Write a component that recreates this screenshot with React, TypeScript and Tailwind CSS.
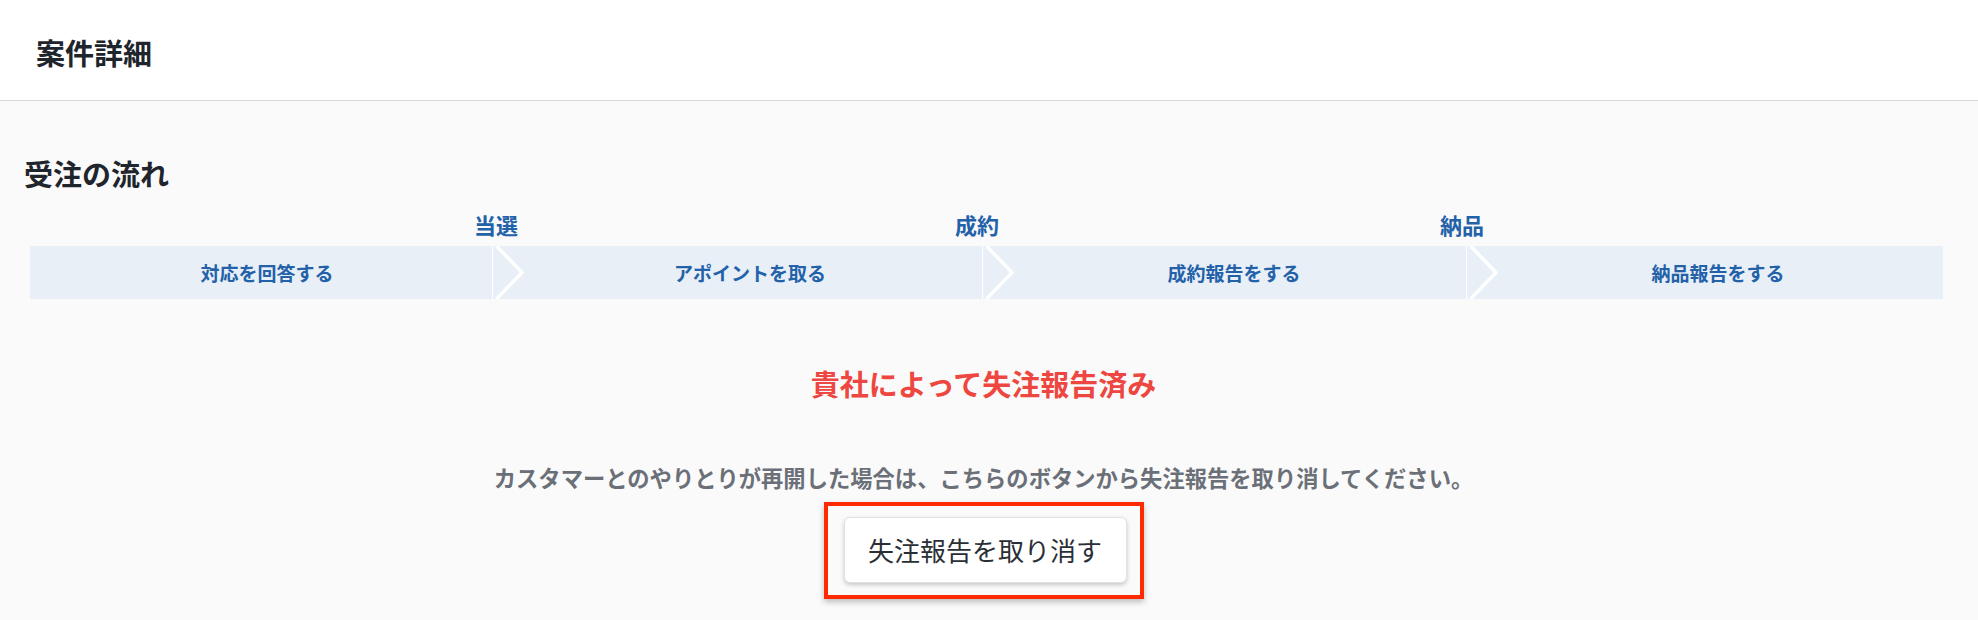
import { FC } from 'react';

type Step = {
  name: string;
  width: string;
  pad: string;
  milestone?: string;
  milestoneShift?: string;
  chevron: boolean;
};

const steps: Step[] = [
  {
    name: '対応を回答する',
    width: 'w-[462px]',
    pad: 'pl-[12px]',
    milestone: '当選',
    milestoneShift: 'mr-[-4px]',
    chevron: false,
  },
  {
    name: 'アポイントを取る',
    width: 'w-[490px]',
    pad: 'pl-[26px]',
    milestone: '成約',
    milestoneShift: 'mr-[5px]',
    chevron: true,
  },
  {
    name: '成約報告をする',
    width: 'w-[484px]',
    pad: 'pl-[20px]',
    milestone: '納品',
    milestoneShift: 'mr-[4px]',
    chevron: true,
  },
  { name: '納品報告をする', width: 'w-[477px]', pad: 'pl-[27px]', chevron: true },
];

const Chevron: FC = () => (
  <svg
    className="absolute left-0 top-0 h-[53px] w-[36px]"
    viewBox="0 0 36 53"
    fill="none"
    aria-hidden="true"
  >
    <line x1="0.5" y1="0" x2="0.5" y2="53" stroke="#ffffff" strokeWidth="1.2" />
    <polyline points="4.5,0 30,26.5 4.5,53" stroke="#ffffff" strokeWidth="3.5" />
  </svg>
);

const App: FC = () => {
  return (
    <div className="min-h-[620px] bg-[#fafafa] font-['Noto_Sans_CJK_JP','Noto_Sans',sans-serif]">
      {/* header */}
      <header className="flex h-[101px] items-center border-b border-[#d9d9d9] bg-white pl-9 pt-[4px]">
        <h1 className="text-[29px] font-bold leading-none text-[#1f252c]">案件詳細</h1>
      </header>

      <main className="pl-6 pr-[35px] pt-[58px]">
        <h2 className="text-[29px] font-bold leading-none text-[#1f252c]">受注の流れ</h2>

        {/* flow */}
        <div className="ml-[6px]">
          <div className="mt-[25px] flex h-[22px]">
            {steps.map((step) => (
              <div key={step.name} className={`flex shrink-0 justify-end ${step.width}`}>
                {step.milestone && (
                  <span
                    className={`translate-x-1/2 whitespace-nowrap text-[22px] font-bold leading-none text-[#2361a9] ${step.milestoneShift}`}
                  >
                    {step.milestone}
                  </span>
                )}
              </div>
            ))}
          </div>

          <div className="mt-[11px] flex h-[53px] bg-[#e8eff7]">
            {steps.map((step) => (
              <div
                key={step.name}
                className={`relative flex shrink-0 items-center justify-center ${step.width} ${step.pad}`}
              >
                {step.chevron && <Chevron />}
                <span className="text-[19px] font-bold leading-none text-[#2361a9]">{step.name}</span>
              </div>
            ))}
          </div>
        </div>

        {/* status */}
        <div className="flex flex-col items-center">
          <p className="mt-[70px] text-[29px] font-bold leading-none text-[#ee4640]">
            貴社によって失注報告済み
          </p>
          <p className="mt-[68px] text-[22.3px] font-bold leading-none text-[#6b7078]">
            カスタマーとのやりとりが再開した場合は、こちらのボタンから失注報告を取り消してください。
          </p>
          <div className="mt-[14px] border-4 border-[#ff2a00] pb-[12px] pl-[16px] pr-[13px] pt-[11px] shadow-[0_3px_6px_rgba(0,0,0,0.25)]">
            <button
              type="button"
              className="flex h-[66px] w-[283px] items-center justify-center rounded-md border border-[#e2e2e2] bg-white text-[26px] leading-none text-[#2a2f36] shadow-[0_2px_4px_rgba(0,0,0,0.2)]"
            >
              失注報告を取り消す
            </button>
          </div>
        </div>
      </main>
    </div>
  );
};

export default App;
